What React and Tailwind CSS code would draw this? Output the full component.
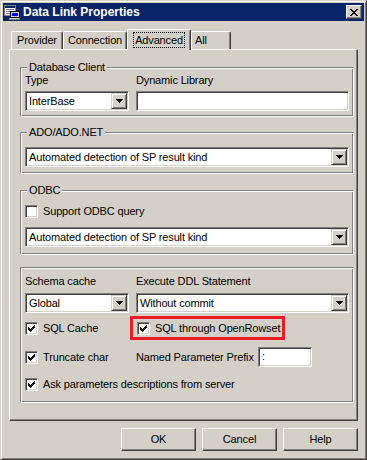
import React from "react";

const sunken =
  "border border-t-[#808080] border-l-[#808080] border-r-white border-b-white shadow-[inset_1px_1px_0_#404040,inset_-1px_-1px_0_#d4d0c8]";
const raised =
  "border border-t-white border-l-white border-r-[#404040] border-b-[#404040] shadow-[inset_-1px_-1px_0_#808080]";

// little pixel glyphs
const CHECK = [
  [6, 0, 1], [5, 1, 2], [0, 2, 1], [4, 2, 3], [0, 3, 2], [3, 3, 3], [0, 4, 5], [1, 5, 3], [2, 6, 1],
];
const CROSS = [
  [0, 0, 2], [6, 0, 2], [1, 1, 2], [5, 1, 2], [2, 2, 4], [3, 3, 2], [2, 4, 4], [1, 5, 2], [5, 5, 2], [0, 6, 2], [6, 6, 2],
];
const ARROW = [[0, 0, 7], [1, 1, 5], [2, 2, 3], [3, 3, 1]];

function Pixels({ rows, w, h }) {
  return (
    <svg width={w} height={h} viewBox={`0 0 ${w} ${h}`} shapeRendering="crispEdges">
      {rows.map(([x, y, len], i) => (
        <rect key={i} x={x} y={y} width={len} height="1" fill="#000" />
      ))}
    </svg>
  );
}

function Combo({ className, value }) {
  return (
    <div className={`${sunken} ${className} bg-white h-[20px] p-[1px] flex`}>
      <span className="flex-1 pl-[2px] leading-[16px] whitespace-nowrap overflow-hidden">{value}</span>
      <div className="w-[16px] h-[16px] bg-[#d4d0c8] border border-t-[#d4d0c8] border-l-[#d4d0c8] border-r-[#404040] border-b-[#404040] shadow-[inset_1px_1px_0_white,inset_-1px_-1px_0_#808080] flex items-center justify-center">
        <Pixels rows={ARROW} w={7} h={4} />
      </div>
    </div>
  );
}

function Check({ checked, label }) {
  return (
    <div className="flex items-center gap-[5px] whitespace-nowrap">
      <div className={`${sunken} shrink-0 w-[13px] h-[13px] bg-white flex items-center justify-center`}>
        {checked && <Pixels rows={CHECK} w={7} h={7} />}
      </div>
      <span className="leading-[13px]">{label}</span>
    </div>
  );
}

function Group({ title, className, children }) {
  return (
    <div
      className={`relative w-[334px] border border-t-[#808080] border-l-[#808080] border-r-white border-b-white shadow-[inset_1px_1px_0_white,inset_-1px_-1px_0_#808080] ${className}`}
    >
      {title && (
        <span className="absolute -top-[7px] left-[6px] bg-[#d4d0c8] px-[2px] leading-[13px]">{title}</span>
      )}
      {children}
    </div>
  );
}

function Tab({ label, className, selected }) {
  if (selected) {
    return (
      <div
        className={`relative z-10 -mb-[1px] h-[21px] bg-[#d4d0c8] rounded-t-[2px] border-l border-t border-r border-l-white border-t-white border-r-[#404040] shadow-[inset_-1px_0_0_#808080] flex justify-center pt-[2px] ${className}`}
      >
        <span className="h-[16px] px-[1px] leading-[14px] border border-dotted border-black">{label}</span>
      </div>
    );
  }
  return (
    <div
      className={`h-[18px] rounded-t-[2px] border-l border-t border-r border-l-white border-t-white border-r-[#404040] shadow-[inset_-1px_0_0_#808080] flex justify-center pt-[2px] leading-[13px] ${className}`}
    >
      {label}
    </div>
  );
}

function Btn({ children }) {
  return (
    <div className={`${raised} w-[75px] h-[23px] flex items-center justify-center`}>{children}</div>
  );
}

function TitleIcon() {
  return (
    <svg width="16" height="16" viewBox="0 0 16 16" shapeRendering="crispEdges">
      <rect x="0" y="1" width="12" height="11" fill="#808080" />
      <rect x="1" y="2" width="10" height="9" fill="#fff" />
      <rect x="1" y="2" width="10" height="2" fill="#0a246a" />
      <rect x="2" y="5" width="8" height="1" fill="#808080" />
      <rect x="2" y="7" width="8" height="1" fill="#808080" />
      <rect x="2" y="9" width="5" height="1" fill="#808080" />
      <rect x="6" y="7" width="10" height="7" fill="#000" />
      <rect x="7" y="8" width="8" height="5" fill="#d4d0c8" />
      <rect x="8" y="9" width="6" height="3" fill="#0000ff" />
      <rect x="5" y="14" width="11" height="2" fill="#808080" />
      <rect x="6" y="14" width="9" height="1" fill="#d4d0c8" />
      <rect x="12" y="15" width="2" height="1" fill="#00c000" />
    </svg>
  );
}

export default function App() {
  return (
    <div className="w-[367px] h-[460px] bg-[#d4d0c8] border border-t-[#d4d0c8] border-l-[#d4d0c8] border-r-[#404040] border-b-[#404040] shadow-[inset_1px_1px_0_white,inset_-1px_-1px_0_#808080] p-[2px] text-[11px] tracking-[-0.15px] text-black font-['Liberation_Sans',Arial,sans-serif]">
      {/* title bar */}
      <div className="h-[18px] bg-[#0a246a] flex items-center pl-[1px] pr-[2px]">
        <TitleIcon />
        <span className="ml-[3px] flex-1 text-white font-bold text-[12px] tracking-normal leading-[16px]">Data Link Properties</span>
        <div className={`${raised} bg-[#d4d0c8] w-[16px] h-[14px] flex items-center justify-center`}>
          <Pixels rows={CROSS} w={8} h={7} />
        </div>
      </div>

      <div className="pt-[8px] pl-[6px] pr-[6px]">
        {/* tabs */}
        <div className="flex items-end h-[20px] pl-[2px]">
          <Tab label="Provider" className="w-[52px]" />
          <Tab label="Connection" className="w-[64px]" />
          <Tab label="Advanced" className="w-[64px]" selected />
          <Tab label="All" className="w-[40px] justify-start pl-[3px]" />
        </div>

        {/* tab page */}
        <div className="w-[349px] h-[372px] border border-t-white border-l-white border-r-[#404040] border-b-[#404040] shadow-[inset_-1px_-1px_0_#808080] pl-[10px] flex flex-col">
          <Group title="Database Client" className="mt-[17px] h-[50px]">
            <div className="flex gap-[7px] pt-[6px] pl-[4px]">
              <div className="flex flex-col gap-[4px]">
                <span className="leading-[13px]">Type</span>
                <Combo className="w-[104px]" value="InterBase" />
              </div>
              <div className="flex flex-col gap-[4px]">
                <span className="leading-[13px]">Dynamic Library</span>
                <div className={`${sunken} bg-white w-[213px] h-[20px]`} />
              </div>
            </div>
          </Group>

          <Group title="ADO/ADO.NET" className="mt-[15px] h-[42px] pt-[14px] pl-[4px]">
            <Combo className="w-[324px]" value="Automated detection of SP result kind" />
          </Group>

          <Group title="ODBC" className="mt-[16px] h-[65px] pt-[14px] pl-[4px]">
            <Check label="Support ODBC query" />
            <Combo className="w-[324px] mt-[9px]" value="Automated detection of SP result kind" />
          </Group>

          <Group className="mt-[12px] h-[136px] pt-[7px] pl-[4px]">
            <div className="flex gap-[7px]">
              <div className="flex flex-col gap-[5px]">
                <span className="leading-[13px]">Schema cache</span>
                <Combo className="w-[104px]" value="Global" />
              </div>
              <div className="flex flex-col gap-[5px]">
                <span className="leading-[13px]">Execute DDL Statement</span>
                <Combo className="w-[213px]" value="Without commit" />
              </div>
            </div>
            <div className="flex items-center mt-[3px]">
              <div className="w-[105px]">
                <Check checked label="SQL Cache" />
              </div>
              <div className="w-[155px] h-[24px] border-[3px] border-[#ed1c24] pl-[4px] flex items-center">
                <Check checked label="SQL through OpenRowset" />
              </div>
            </div>
            <div className="flex items-center h-[20px] mt-[7px]">
              <div className="w-[111px]">
                <Check checked label="Truncate char" />
              </div>
              <span className="w-[122px] leading-[13px] whitespace-nowrap">Named Parameter Prefix</span>
              <div className={`${sunken} bg-white w-[54px] h-[20px] pl-[3px] leading-[16px]`}>:</div>
            </div>
            <div className="mt-[11px]">
              <Check checked label="Ask parameters descriptions from server" />
            </div>
          </Group>
        </div>

        {/* buttons */}
        <div className="flex justify-end gap-[6px] mt-[7px]">
          <Btn>OK</Btn>
          <Btn>Cancel</Btn>
          <Btn>Help</Btn>
        </div>
      </div>
    </div>
  );
}
